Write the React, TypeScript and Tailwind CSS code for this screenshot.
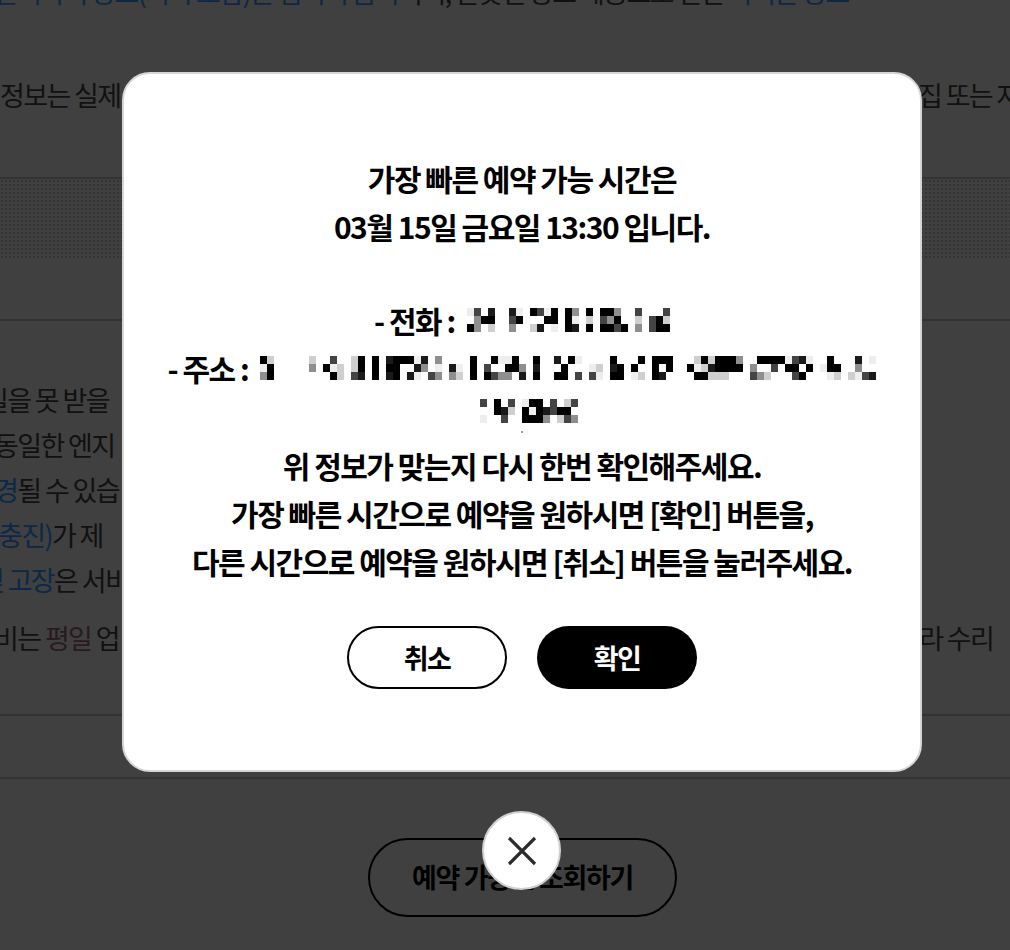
import React from 'react';

const FONT = "font-['Noto_Sans_CJK_KR','Noto_Sans',sans-serif]";

/* ── mosaic (blurred personal info) ── */
const CELL = [
  'bg-white', 'bg-white', 'bg-white', 'bg-[#eee]', 'bg-[#cfcfcf]',
  'bg-[#8f8f8f]', 'bg-[#444]', 'bg-[#1a1a1a]', 'bg-black', 'bg-black', 'bg-black', 'bg-black',
];

function mosaic(seed: number, cols: number) {
  let s = seed;
  const rnd = () => {
    s = (s * 16807) % 2147483647;
    return s / 2147483647;
  };
  const out: string[][] = [];
  for (let c = 0; c < cols; c++) {
    const gap = rnd() < 0.22;
    out.push([0, 1, 2].map(() => (gap ? 'bg-white' : CELL[Math.floor(rnd() * CELL.length)])));
  }
  return out;
}

const Mosaic = ({ seed, cols }: { seed: number; cols: number }) => (
  <span className="inline-flex align-middle">
    {mosaic(seed, cols).map((col, i) => (
      <span key={i} className="flex w-[7px] flex-col">
        {col.map((c, j) => (
          <span key={j} className={`h-[8px] w-[7px] ${c}`} />
        ))}
      </span>
    ))}
  </span>
);

/* ── one background row: left strip | hidden middle | right strip ── */
const Row = ({ left, right, className = '' }: { left?: React.ReactNode; right?: React.ReactNode; className?: string }) => (
  <div className={`grid grid-cols-[122px_800px_1fr] whitespace-nowrap ${className}`}>
    <div className="overflow-hidden">{left}</div>
    <div />
    <div className="overflow-visible">{right}</div>
  </div>
);

export default function App() {
  return (
    <div className={`relative h-[950px] w-full overflow-hidden bg-[#404040] ${FONT}`}>
      {/* ── page behind the dim overlay ── */}
      <div className="flex flex-col text-[27px] tracking-[-0.06em] text-[#111]">
        <div className="-mt-[26px] h-[36px] whitespace-nowrap leading-[36px]">
          <span className="-ml-[6px] text-[#0c2848]">관리자의 광고(기록 포함)는 엄격히 금지</span>
          <span>이며, 잘못된 광고 제공으로 인한 </span>
          <span className="text-[#0c2848]">목적은 광고</span>
        </div>

        <Row
          className="mt-[67px] h-[36px] leading-[36px]"
          left={<span>정보는 실제</span>}
          right={<span className="-ml-[4px] inline-block">집 또는 자</span>}
        />

        <div className="mt-[64px] h-[2px] bg-[#333]" />
        <div className="h-[80px] bg-[radial-gradient(#333_1px,transparent_1.3px)] bg-[length:4px_4px]" />
        <div className="h-[60px]" />
        <div className="h-[2px] bg-[#333]" />

        <div className="flex flex-col pt-[56px] leading-[45px]">
          <Row left={<span className="-ml-[16px] inline-block">일을 못 받을</span>} />
          <Row left={<span className="-ml-[6px] inline-block">동일한 엔지</span>} />
          <Row
            left={
              <span className="-ml-[6px] inline-block">
                <span className="text-[#0c2848]">경</span>될 수 있습
              </span>
            }
          />
          <Row
            left={
              <span className="-ml-[2px] inline-block">
                <span className="text-[#0c2848]">충진)</span>가 제
              </span>
            }
          />
          <Row
            left={
              <span className="-ml-[20px] inline-block">
                <span className="text-[#0c2848]">및 고장</span>은 서비
              </span>
            }
          />
          <Row
            className="mt-[13px]"
            left={
              <span className="-ml-[6px] inline-block">
                비는 <span className="text-[#2a1a1e]">평일</span> 업
              </span>
            }
            right={<span className="-ml-[26px] inline-block">따라 수리</span>}
          />
        </div>

        <div className="mt-[54px] h-[2px] bg-[#333]" />
        <div className="h-[61px]" />
        <div className="h-[2px] bg-[#333]" />

        <div className="mt-[59px] flex justify-start pl-[368px]">
          <button className="flex h-[79px] w-[309px] items-center justify-center rounded-full border-2 border-black text-[27px] font-bold tracking-[-0.05em] text-black">
            예약 가능일 조회하기
          </button>
        </div>
      </div>

      {/* ── Modal ── */}
      <div className="absolute left-[122px] top-[72px] flex h-[700px] w-[800px] flex-col items-center rounded-[28px] border-2 border-[#d6d6d6] bg-white pt-[80px] text-center text-[30px] font-bold leading-[48px] tracking-[-0.05em] text-black">
        <p>가장 빠른 예약 가능 시간은</p>
        <p>03월 15일 금요일 13:30 입니다.</p>
        <div className="h-[46px]" />
        <p className="flex items-center">
          <span>- 전화 :&nbsp;</span>
          <Mosaic seed={11} cols={30} />
        </p>
        <p className="flex h-[47px] items-center">
          <span>- 주소 :&nbsp;</span>
          <Mosaic seed={29} cols={89} />
        </p>
        <div className="flex h-[40px] items-center">
          <Mosaic seed={47} cols={16} />
        </div>
        <div className="flex h-[10px] items-start justify-center">
          <span className="h-[2px] w-[2px] bg-[#999]" />
        </div>
        <p>위 정보가 맞는지 다시 한번 확인해주세요.</p>
        <p>가장 빠른 시간으로 예약을 원하시면 [확인] 버튼을,</p>
        <p>다른 시간으로 예약을 원하시면 [취소] 버튼을 눌러주세요.</p>

        <div className="mt-[41px] flex gap-[30px]">
          <button className="flex h-[63px] w-[160px] items-center justify-center rounded-full border-2 border-black bg-white text-[27px] font-bold text-black">
            취소
          </button>
          <button className="flex h-[63px] w-[160px] items-center justify-center rounded-full bg-black text-[27px] font-bold text-white">
            확인
          </button>
        </div>
      </div>

      {/* ── Close button ── */}
      <button
        aria-label="닫기"
        className="absolute left-[482px] top-[811px] flex h-[79px] w-[79px] items-center justify-center rounded-full border-2 border-[#d0d0d0] bg-white"
      >
        <svg width="30" height="30" viewBox="0 0 30 30" fill="none" stroke="#2b2b2b" strokeWidth="3.2">
          <path d="M2 2 L28 28 M28 2 L2 28" />
        </svg>
      </button>
    </div>
  );
}
